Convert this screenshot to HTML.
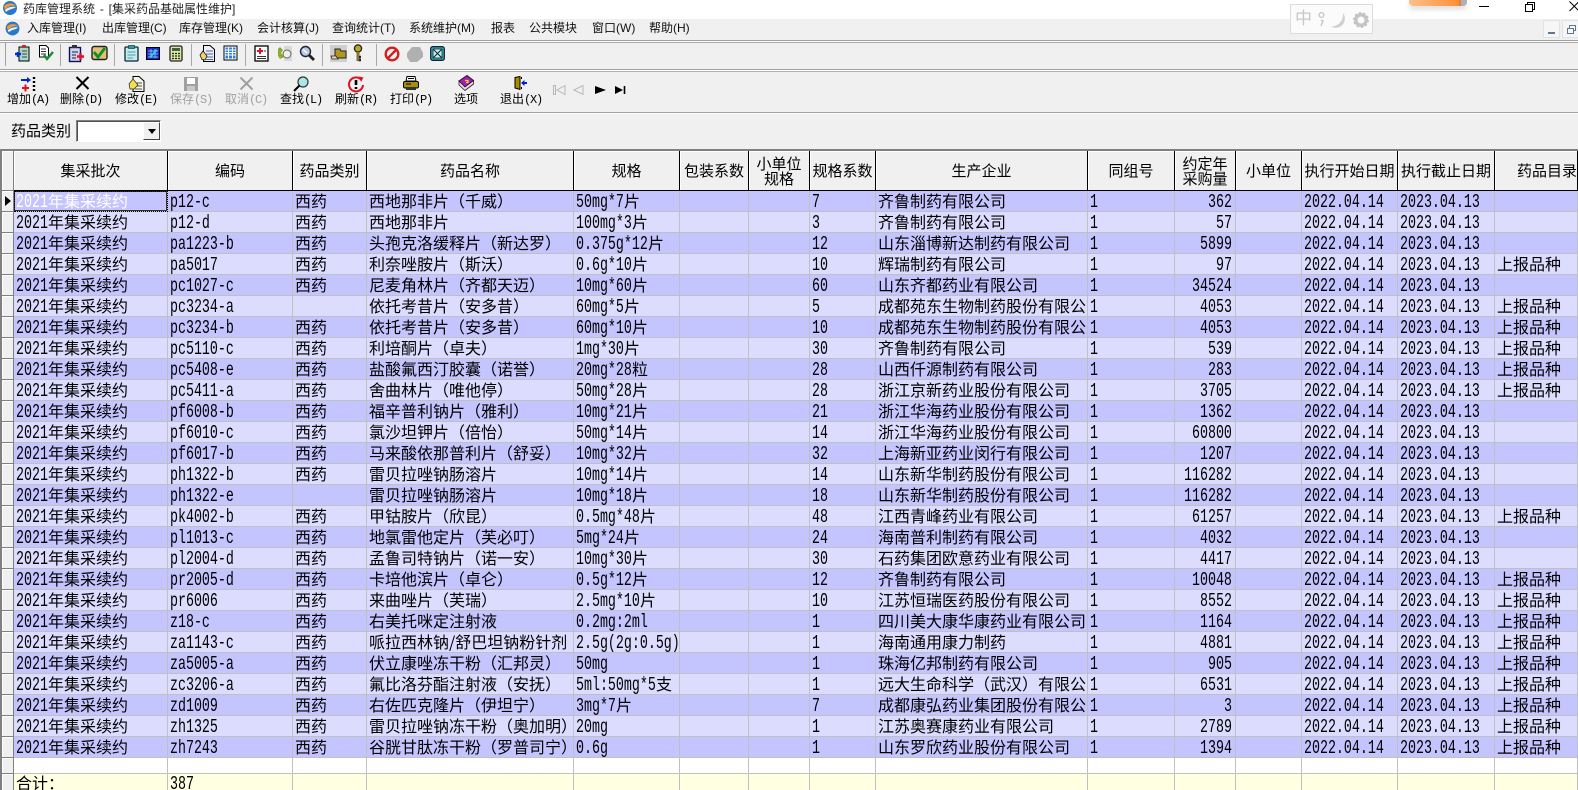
<!DOCTYPE html>
<html lang="zh"><head><meta charset="utf-8"><title>药库管理系统</title>
<style>
*{box-sizing:border-box}
html,body{margin:0;padding:0}
body{width:1578px;height:787px;overflow:hidden;position:relative;background:#f0f0f0;font-family:"Liberation Sans","WenQuanYi Zen Hei","Noto Sans CJK SC",sans-serif;color:#000}
.a{position:absolute;white-space:nowrap}
.ln{position:absolute;left:0;width:1578px;height:1px;background:#a0a0a0}
.vs{position:absolute;top:44px;width:1px;height:22px;background:#a8a8a8}
.m{font-size:12px;line-height:16px;top:20px;color:#111}
.lb{font-size:12px;line-height:16px;top:91px;font-family:"WenQuanYi Zen Hei","Noto Sans CJK SC",sans-serif}
.lb i{font:normal 12px/16px "Liberation Mono",monospace;letter-spacing:-1.2px}
.g{color:#a0a0a0}
svg{position:absolute;overflow:visible}
table{position:absolute;left:0;top:151px;width:1578px;border-collapse:separate;border-spacing:0;table-layout:fixed;font:16px/18px "WenQuanYi Zen Hei","Noto Sans CJK SC",sans-serif}
td{height:21px;padding:0 0 0 2px;border-right:1px solid #c0c0c0;border-bottom:1px solid #c0c0c0;overflow:hidden;white-space:nowrap;vertical-align:top}
td i{display:inline-block;height:18px;vertical-align:top;font:normal 19px/18px "Liberation Mono",monospace;transform:translateY(2px) scaleX(.7);transform-origin:0 50%;white-space:nowrap}
.n1{width:8px}.n2{width:16px}.n3{width:24px}.n4{width:32px}.n5{width:40px}.n6{width:48px}.n7{width:56px}.n8{width:64px}.n9{width:72px}.n10{width:80px}.n13{width:104px}
td.r{text-align:right;padding:0 3px 0 0}
tr.h td{height:40px;background:#f0f0f0;border-right:1px solid #000;border-bottom:1px solid #000;box-shadow:inset 1px 1px #fff;text-align:center;padding:0;font-size:15px;line-height:15px;vertical-align:middle}
td.s,tr.h td.s{background:#f0f0f0;border-left:2px solid #808080;border-right:1px solid #808080;border-bottom:1px solid #808080;box-shadow:inset 1px 1px #fff;padding:0;position:relative}
tr.d td{background:#c4c4ff}
tr.e td{background:#dcdcff}
tr.d td.s,tr.e td.s{background:#f0f0f0}
tr.b td{height:16px;background:#fff;font-size:1px;line-height:1px}
tr.b td.s,tr.t td.s{background:#f0f0f0}
tr.t td{height:14px;background:#ffffe1;border-bottom:0;line-height:16px}
tr.t td i{height:16px;line-height:16px}
td.f{color:#fff;outline:1px dotted #000;outline-offset:-1px;box-shadow:inset 0 0 0 1px #333}
</style></head><body>

<!-- title bar -->
<div class="a" style="left:0;top:0;width:1578px;height:19px;background:#fff"></div>
<svg style="left:2px;top:0" width="16" height="16" viewBox="0 0 16 16"><circle cx="8" cy="8" r="7" fill="#2a78c8"/><path d="M2 6C6 2 12 3 14 6C10 5 6 6 3 10Z" fill="#f29a2e"/><path d="M3 10C6 7 10 6 14 7C12 9 7 9 4 12Z" fill="#e8eef5"/></svg>
<div class="a" style="left:23px;top:1px;font-size:12px;line-height:16px;color:#222;word-spacing:1.5px">药库管理系统 - [集采药品基础属性维护]</div>

<!-- IME widget -->
<div class="a" style="left:1290px;top:4px;width:83px;height:30px;background:#fbfbfb;border:1px solid #dcdcdc"></div>
<div class="a" style="left:1295px;top:9px;font-size:17px;line-height:20px;color:#c8c8c8">中</div>
<svg style="left:1318px;top:11px" width="54" height="20" viewBox="0 0 54 20"><circle cx="3.500" cy="4" r="2.400" fill="none" stroke="#c4c4c4" stroke-width="1.300"/><path d="M3 9L5 10L3 15" fill="none" stroke="#c4c4c4" stroke-width="1.400"/><path d="M25 2A9.200 9.200 0 0 1 13 15.500A12 12 0 0 0 25 2Z" fill="#d0d0d0"/><circle cx="43" cy="9" r="5.200" fill="none" stroke="#c4c4c4" stroke-width="3.400"/><circle cx="43" cy="9" r="7.200" fill="none" stroke="#c4c4c4" stroke-width="1.600" stroke-dasharray="2.400 2.100"/></svg>

<!-- orange bar & window controls -->
<div class="a" style="left:1409px;top:0;width:58px;height:6px;background:linear-gradient(90deg,#fbc08a,#ff8f3a 85%,#f07020 88%,#b0b0b0 90%);border-radius:0 0 4px 4px;box-shadow:0 3px 6px rgba(0,0,0,.15)"></div>
<div class="a" style="left:1479px;top:6px;width:10px;height:1px;background:#000"></div>
<svg style="left:1524px;top:1px" width="12" height="12" viewBox="0 0 12 12"><path d="M1.500 3.500H8.500V10.500H1.500ZM3.500 3.500V1.500H10.500V8.500H8.500" fill="none" stroke="#000"/></svg>
<svg style="left:1569px;top:1px" width="10" height="10" viewBox="0 0 10 10"><path d="M.5.5L10 10M10 .5L.5 10" stroke="#000"/></svg>

<!-- menu bar -->
<svg style="left:5px;top:21px" width="15" height="15" viewBox="0 0 16 16"><circle cx="8" cy="8" r="7.400" fill="#2a78c8"/><path d="M2 6C6 2 12 3 14 6C10 5 6 6 3 10Z" fill="#f29a2e"/><path d="M3 10C6 7 10 6 14 7C12 9 7 9 4 12Z" fill="#e8eef5"/></svg>
<div class="a m" style="left:27px">入库管理(I)</div>
<div class="a m" style="left:102px">出库管理(C)</div>
<div class="a m" style="left:179px">库存管理(K)</div>
<div class="a m" style="left:257px">会计核算(J)</div>
<div class="a m" style="left:332px">查询统计(T)</div>
<div class="a m" style="left:409px">系统维护(M)</div>
<div class="a m" style="left:491px">报表</div>
<div class="a m" style="left:529px">公共模块</div>
<div class="a m" style="left:592px">窗口(W)</div>
<div class="a m" style="left:649px">帮助(H)</div>
<div class="a" style="left:1543px;top:20px;width:17px;height:18px;background:#f6f6f6;border:1px solid #e2e2e2"></div>
<div class="a" style="left:1548px;top:32px;width:7px;height:2px;background:#5f7890"></div>
<div class="a" style="left:1562px;top:20px;width:17px;height:18px;background:#f6f6f6;border:1px solid #e2e2e2"></div>
<svg style="left:1567px;top:25px" width="10" height="10" viewBox="0 0 10 10"><path d="M.5 3.500H6.500V8.500H.5ZM2.500 3.500V.5H8.500V5.500H6.500" fill="none" stroke="#5f7890"/></svg>

<!-- toolbar lines -->
<div class="ln" style="top:40px;background:#a0a0a0"></div><div class="ln" style="top:41px;background:#fff"></div><div class="ln" style="top:42px;background:#a8a8a8"></div>
<div class="ln" style="top:69px"></div><div class="ln" style="top:70px;background:#fff"></div><div class="ln" style="top:71px;background:#b0b0b0"></div>
<div class="ln" style="top:112px"></div><div class="ln" style="top:113px;background:#fff"></div>
<div class="a" style="left:5px;top:43px;width:1px;height:23px;background:#a0a0a0"></div>
<div class="a" style="left:9px;top:43px;width:2px;height:1px;background:#fff"></div>
<div class="vs" style="left:60px"></div><div class="vs" style="left:114px"></div><div class="vs" style="left:191px"></div><div class="vs" style="left:245px"></div><div class="vs" style="left:322px"></div><div class="vs" style="left:376px"></div>

<!-- toolbar 1 icons -->
<svg style="left:14px;top:45px" width="16" height="18" viewBox="0 0 16 18"><rect x="5" y="2" width="10" height="14" fill="#a8d8c8" stroke="#000"/><path d="M8 6H13M8 9H13M8 12H13" stroke="#444"/><rect x="8" y="0" width="4" height="3" fill="#c03030"/><path d="M1 9H7M4 7V12" stroke="#0030c0" stroke-width="2.400"/></svg>
<svg style="left:38px;top:44px" width="17" height="18" viewBox="0 0 17 18"><path d="M1.500 1.500H8L10.500 4V13H1.500Z" fill="#fff" stroke="#000"/><path d="M3 5H8M3 7.500H8M3 10H8" stroke="#333"/><path d="M6 11L9 15L15 8" fill="none" stroke="#109030" stroke-width="2.400"/></svg>
<svg style="left:68px;top:45px" width="17" height="18" viewBox="0 0 17 18"><rect x="1.500" y="2.500" width="11" height="14" fill="#cfd4ef" stroke="#101060" stroke-width="1.400"/><path d="M4 7H10M4 10H8M4 13H8" stroke="#222"/><rect x="4" y="0" width="5" height="3" fill="#333"/><path d="M9 11.500H16M12.500 8V15" stroke="#e01030" stroke-width="2.400"/></svg>
<svg style="left:91px;top:45px" width="17" height="16" viewBox="0 0 17 16"><rect x="1" y="1.500" width="15" height="13" rx="2" fill="#e6c070" stroke="#222" stroke-width="1.400"/><path d="M3 7L7 12L14 3" fill="none" stroke="#109030" stroke-width="3"/></svg>
<svg style="left:124px;top:45px" width="15" height="18" viewBox="0 0 15 18"><rect x="1" y="2" width="13" height="14" rx="1" fill="#bfeef0" stroke="#123" stroke-width="1.300"/><rect x="4.500" y="0.500" width="6" height="3" fill="#28a0a8" stroke="#123" stroke-width=".6"/><path d="M3.500 7H11.500M3.500 10H11.500M3.500 13H9" stroke="#6090a0"/></svg>
<svg style="left:146px;top:47px" width="14" height="13" viewBox="0 0 14 13"><rect x=".5" y=".5" width="13" height="12" fill="#1828c8" stroke="#000"/><path d="M2 4H12M2 7H12M2 10H12M5 2V11M9 2V11" stroke="#80b8f0"/><path d="M4 10L11 3" stroke="#30d0d0" stroke-width="2"/></svg>
<svg style="left:169px;top:45px" width="14" height="18" viewBox="0 0 14 18"><rect x="1" y="1" width="12" height="15" rx="1.500" fill="#d8e8a0" stroke="#222" stroke-width="1.300"/><rect x="3" y="3" width="8" height="3" fill="#406040"/><path d="M3 8.500H5M6 8.500H8M9 8.500H11M3 11H5M6 11H8M9 11H11M3 13.500H5M6 13.500H8M9 13.500H11" stroke="#222" stroke-width="1.300"/></svg>
<svg style="left:199px;top:45px" width="17" height="18" viewBox="0 0 17 18"><path d="M4.500 .5H11L15.500 4.500V16.500H4.500Z" fill="#eef" stroke="#000"/><path d="M7 6H14M7 9H14M7 12H14M7 14.500H14" stroke="#4a6a8a"/><path d="M1 10L4 6L8 11L6 15L3 14.500Z" fill="#f0d070" stroke="#000" stroke-width=".7"/></svg>
<svg style="left:223px;top:45px" width="15" height="16" viewBox="0 0 15 16"><rect x="1" y="1" width="13" height="14" fill="#fff" stroke="#000"/><rect x="2.500" y="2.500" width="10" height="11" fill="#2a80e8"/><path d="M2.500 5H12.500M2.500 7.500H12.500M2.500 10H12.500M5.500 2.500V13.500M9.500 2.500V13.500" stroke="#fff" stroke-width=".9"/></svg>
<svg style="left:254px;top:45px" width="15" height="17" viewBox="0 0 15 17"><rect x="1" y="1" width="13" height="15" fill="#fff" stroke="#000" stroke-width="1.300"/><path d="M3 6H9M6 3V9" stroke="#e01020" stroke-width="2"/><path d="M3 11.500H12M3 13.500H12M10 6H12" stroke="#333"/></svg>
<svg style="left:276px;top:45px" width="17" height="17" viewBox="0 0 17 17"><rect x="8" y="1" width="8" height="15" fill="#d8d8d8"/><circle cx="11" cy="9" r="4" fill="#eee" stroke="#666"/><path d="M2 4L4 2L7 5L5 8L8 12L4 14L2 11Z" fill="#70b030"/><path d="M4 5V13" stroke="#c8a020" stroke-width="2" stroke-dasharray="2 1"/></svg>
<svg style="left:299px;top:45px" width="17" height="17" viewBox="0 0 17 17"><circle cx="6.500" cy="6.500" r="5" fill="#b8c8e8" stroke="#223" stroke-width="1.400"/><path d="M4 4.500L8 8" stroke="#fff" stroke-width="1.400"/><path d="M10 10L15 15" stroke="#222" stroke-width="2.800"/></svg>
<svg style="left:330px;top:45px" width="17" height="17" viewBox="0 0 17 17"><rect width="17" height="17" fill="#cfcfcf"/><path d="M5 4H10L11 6H16V13H5Z" fill="#b09820" stroke="#222"/><path d="M1 11H6L8 14H2Z" fill="#f0d8a8" stroke="#222" stroke-width=".8"/></svg>
<svg style="left:352px;top:44px" width="12" height="19" viewBox="0 0 12 19"><circle cx="6" cy="4.500" r="3.600" fill="#b8a820" stroke="#222" stroke-width="1.300"/><path d="M6 8V17M6 13H9M6 16H9" stroke="#222" stroke-width="2.600"/><path d="M6 8V17" stroke="#c8b020" stroke-width="1.200"/></svg>
<svg style="left:384px;top:46px" width="16" height="16" viewBox="0 0 16 16"><circle cx="8" cy="8" r="6.300" fill="#f8f0f0" stroke="#d02020" stroke-width="2.400"/><path d="M3.500 12.500L12.500 3.500" stroke="#d02020" stroke-width="2.400"/></svg>
<svg style="left:407px;top:46px" width="16" height="16" viewBox="0 0 16 16"><path d="M5 1H13L16 7V11L10 16H3L0 11V7Z" fill="#b0b0b0"/></svg>
<svg style="left:430px;top:46px" width="15" height="15" viewBox="0 0 15 15"><rect x=".7" y=".7" width="13.600" height="13.600" rx="2" fill="#38b8b8" stroke="#123" stroke-width="1.300"/><rect x="3" y="3" width="9" height="9" fill="#c8f0f0" stroke="#123" stroke-width=".8"/><path d="M3 3L12 12M12 3L3 12" stroke="#123"/></svg>

<!-- toolbar 2 icons -->
<svg style="left:20px;top:76px" width="17" height="16" viewBox="0 0 17 16"><path d="M1 4H8" stroke="#0020e0" stroke-width="2"/><path d="M7 1L11 4L7 7Z" fill="#0020e0"/><path d="M2 12H9M5.500 8.500V15.500" stroke="#e01020" stroke-width="2"/><path d="M14 1V3M14 5V7M14 9V11M14 13V15" stroke="#000" stroke-width="2.400"/></svg>
<svg style="left:75px;top:76px" width="15" height="14" viewBox="0 0 15 14"><path d="M1.500 1L13.500 13M13.500 1L1.500 13" stroke="#000" stroke-width="2"/></svg>
<svg style="left:128px;top:76px" width="17" height="16" viewBox="0 0 17 16"><path d="M5 .5H11L16 5V15.500H5Z" fill="#f4f4e8" stroke="#000"/><path d="M7 7H14M7 10H14M7 13H14" stroke="#555"/><path d="M1 8L5 3L10 9L6 13H2Z" fill="#f0e050" stroke="#222" stroke-width=".7"/></svg>
<svg style="left:184px;top:77px" width="14" height="14" viewBox="0 0 14 14"><rect width="14" height="14" fill="#a0a0a0"/><rect x="3" y="1" width="8" height="6" fill="#fff"/><rect x="3" y="9" width="8" height="5" fill="#c8c8c8"/></svg>
<svg style="left:239px;top:77px" width="15" height="13" viewBox="0 0 15 13"><path d="M1.500 .5L13.500 12.500M13.500 .5L1.500 12.500" stroke="#a0a0a0" stroke-width="2"/></svg>
<svg style="left:293px;top:76px" width="16" height="16" viewBox="0 0 16 16"><circle cx="10" cy="6" r="5" fill="#a8e8e8" stroke="#333" stroke-width="1.200"/><path d="M6.500 9.500L1 15" stroke="#000" stroke-width="2"/></svg>
<svg style="left:348px;top:76px" width="16" height="16" viewBox="0 0 16 16"><path d="M13 3.500A7 7 0 1 0 15 9" fill="none" stroke="#e01020" stroke-width="2"/><path d="M11 .5L15.500 1.500L13 6Z" fill="#e01020"/><path d="M8 4V9" stroke="#000" stroke-width="2.600"/><path d="M8 11V13" stroke="#000" stroke-width="2.600"/></svg>
<svg style="left:403px;top:76px" width="16" height="15" viewBox="0 0 16 15"><path d="M4 .5H12L13 5H3Z" fill="#fff" stroke="#000"/><path d="M5 2.500H11" stroke="#000"/><rect x=".5" y="5.500" width="15" height="6.500" rx="1.500" fill="#a89000" stroke="#000"/><rect x="3" y="11" width="10" height="3" fill="#333"/><path d="M3 8H8" stroke="#000"/></svg>
<svg style="left:458px;top:75px" width="16" height="16" viewBox="0 0 16 16"><path d="M1 6L9 .5L15.500 5.500L7 12Z" fill="#a020b0" stroke="#301030"/><path d="M1 6V10L7 15.500L15.500 9V5.500L7 12Z" fill="#e8e0e0" stroke="#301030" stroke-width=".8"/><path d="M7 5.500H10V7.500H8" fill="none" stroke="#f0e020" stroke-width="1.300"/></svg>
<svg style="left:514px;top:76px" width="14" height="14" viewBox="0 0 14 14"><path d="M1 1.500L6 .5V13.500L1 12Z" fill="#a88c00" stroke="#000"/><path d="M7.500 1V3M7.500 11V13" stroke="#000"/><path d="M13 7H10" stroke="#0020d0" stroke-width="2"/><path d="M10.500 4L7 7L10.500 10Z" fill="#0020d0"/></svg>
<svg style="left:553px;top:85px" width="74" height="11" viewBox="0 0 74 11"><path d="M.5 .5V9.500H2.500V.5ZM12 .5L4 5L12 9.500Z" fill="#f0f0f0" stroke="#b8b8b8"/><path d="M30 .5L21 5L30 9.500Z" fill="#f0f0f0" stroke="#b8b8b8"/><path d="M42 1L53 5L42 9Z" fill="#000"/><path d="M62 1L70 5L62 9Z" fill="#000"/><path d="M71.500 1V9" stroke="#000" stroke-width="1.600"/></svg>

<!-- toolbar 2 labels -->
<div class="a lb" style="left:7px">增加<i>(A)</i></div>
<div class="a lb" style="left:60px">删除<i>(D)</i></div>
<div class="a lb" style="left:115px">修改<i>(E)</i></div>
<div class="a lb g" style="left:170px">保存<i>(S)</i></div>
<div class="a lb g" style="left:225px">取消<i>(C)</i></div>
<div class="a lb" style="left:280px">查找<i>(L)</i></div>
<div class="a lb" style="left:335px">刷新<i>(R)</i></div>
<div class="a lb" style="left:390px">打印<i>(P)</i></div>
<div class="a lb" style="left:454px">选项</div>
<div class="a lb" style="left:500px">退出<i>(X)</i></div>

<!-- filter -->
<div class="a" style="left:11px;top:121px;font:15px/20px 'WenQuanYi Zen Hei','Noto Sans CJK SC',sans-serif">药品类别</div>
<div class="a" style="left:76px;top:120px;width:85px;height:22px;background:#fff;border:1px solid;border-color:#808080 #fff #fff #808080;box-shadow:inset 1px 1px #505050"></div>
<div class="a" style="left:143px;top:122px;width:17px;height:18px;background:#f0f0f0;border:1px solid;border-color:#fff #404040 #404040 #fff"></div>
<svg style="left:148px;top:129px" width="8" height="5" viewBox="0 0 8 5"><path d="M0 0H8L4 5Z"/></svg>

<!-- grid top -->
<div class="ln" style="top:149px;height:2px;background:#808080"></div>

<table>
<colgroup><col style="width:14px"><col style="width:154px"><col style="width:125px"><col style="width:74px"><col style="width:207px"><col style="width:106px"><col style="width:69px"><col style="width:61px"><col style="width:66px"><col style="width:212px"><col style="width:87px"><col style="width:61px"><col style="width:66px"><col style="width:96px"><col style="width:97px"><col style="width:83px"></colgroup>
<tr class="h"><td class="s"></td><td>集采批次</td><td>编码</td><td>药品类别</td><td>药品名称</td><td>规格</td><td>包装系数</td><td>小单位<br>规格</td><td>规格系数</td><td>生产企业</td><td>同组号</td><td>约定年<br>采购量</td><td>小单位</td><td>执行开始日期</td><td>执行截止日期</td><td style="text-align:left;padding-left:22px">药品目录分类</td></tr>
<tr class="d"><td class="s"><svg style="left:3px;top:5px" width="6" height="10" viewBox="0 0 6 10"><path d="M0 0L6 5L0 10Z"/></svg></td><td class="f"><i class="n4">2021</i>年集采续约</td><td><i class="n5">p12-c</i></td><td>西药</td><td>西地那非片（千威）</td><td><i class="n6">50mg*7</i>片</td><td></td><td></td><td><i class="n1">7</i></td><td>齐鲁制药有限公司</td><td><i class="n1">1</i></td><td class="r"><i class="n3">362</i></td><td></td><td><i class="n10">2022.04.14</i></td><td><i class="n10">2023.04.13</i></td><td></td></tr>
<tr class="e"><td class="s"></td><td><i class="n4">2021</i>年集采续约</td><td><i class="n5">p12-d</i></td><td>西药</td><td>西地那非片</td><td><i class="n7">100mg*3</i>片</td><td></td><td></td><td><i class="n1">3</i></td><td>齐鲁制药有限公司</td><td><i class="n1">1</i></td><td class="r"><i class="n2">57</i></td><td></td><td><i class="n10">2022.04.14</i></td><td><i class="n10">2023.04.13</i></td><td></td></tr>
<tr class="d"><td class="s"></td><td><i class="n4">2021</i>年集采续约</td><td><i class="n8">pa1223-b</i></td><td>西药</td><td>头孢克洛缓释片（新达罗）</td><td><i class="n9">0.375g*12</i>片</td><td></td><td></td><td><i class="n2">12</i></td><td>山东淄博新达制药有限公司</td><td><i class="n1">1</i></td><td class="r"><i class="n4">5899</i></td><td></td><td><i class="n10">2022.04.14</i></td><td><i class="n10">2023.04.13</i></td><td></td></tr>
<tr class="e"><td class="s"></td><td><i class="n4">2021</i>年集采续约</td><td><i class="n6">pa5017</i></td><td>西药</td><td>利奈唑胺片（斯沃）</td><td><i class="n7">0.6g*10</i>片</td><td></td><td></td><td><i class="n2">10</i></td><td>辉瑞制药有限公司</td><td><i class="n1">1</i></td><td class="r"><i class="n2">97</i></td><td></td><td><i class="n10">2022.04.14</i></td><td><i class="n10">2023.04.13</i></td><td>上报品种</td></tr>
<tr class="d"><td class="s"></td><td><i class="n4">2021</i>年集采续约</td><td><i class="n8">pc1027-c</i></td><td>西药</td><td>尼麦角林片（齐都天迈）</td><td><i class="n7">10mg*60</i>片</td><td></td><td></td><td><i class="n2">60</i></td><td>山东齐都药业有限公司</td><td><i class="n1">1</i></td><td class="r"><i class="n5">34524</i></td><td></td><td><i class="n10">2022.04.14</i></td><td><i class="n10">2023.04.13</i></td><td></td></tr>
<tr class="e"><td class="s"></td><td><i class="n4">2021</i>年集采续约</td><td><i class="n8">pc3234-a</i></td><td></td><td>依托考昔片（安多昔）</td><td><i class="n6">60mg*5</i>片</td><td></td><td></td><td><i class="n1">5</i></td><td>成都苑东生物制药股份有限公司</td><td><i class="n1">1</i></td><td class="r"><i class="n4">4053</i></td><td></td><td><i class="n10">2022.04.14</i></td><td><i class="n10">2023.04.13</i></td><td>上报品种</td></tr>
<tr class="d"><td class="s"></td><td><i class="n4">2021</i>年集采续约</td><td><i class="n8">pc3234-b</i></td><td>西药</td><td>依托考昔片（安多昔）</td><td><i class="n7">60mg*10</i>片</td><td></td><td></td><td><i class="n2">10</i></td><td>成都苑东生物制药股份有限公司</td><td><i class="n1">1</i></td><td class="r"><i class="n4">4053</i></td><td></td><td><i class="n10">2022.04.14</i></td><td><i class="n10">2023.04.13</i></td><td>上报品种</td></tr>
<tr class="e"><td class="s"></td><td><i class="n4">2021</i>年集采续约</td><td><i class="n8">pc5110-c</i></td><td>西药</td><td>利培酮片（卓夫）</td><td><i class="n6">1mg*30</i>片</td><td></td><td></td><td><i class="n2">30</i></td><td>齐鲁制药有限公司</td><td><i class="n1">1</i></td><td class="r"><i class="n3">539</i></td><td></td><td><i class="n10">2022.04.14</i></td><td><i class="n10">2023.04.13</i></td><td>上报品种</td></tr>
<tr class="d"><td class="s"></td><td><i class="n4">2021</i>年集采续约</td><td><i class="n8">pc5408-e</i></td><td>西药</td><td>盐酸氟西汀胶囊（诺誉）</td><td><i class="n7">20mg*28</i>粒</td><td></td><td></td><td><i class="n2">28</i></td><td>山西仟源制药有限公司</td><td><i class="n1">1</i></td><td class="r"><i class="n3">283</i></td><td></td><td><i class="n10">2022.04.14</i></td><td><i class="n10">2023.04.13</i></td><td>上报品种</td></tr>
<tr class="e"><td class="s"></td><td><i class="n4">2021</i>年集采续约</td><td><i class="n8">pc5411-a</i></td><td>西药</td><td>舍曲林片（唯他停）</td><td><i class="n7">50mg*28</i>片</td><td></td><td></td><td><i class="n2">28</i></td><td>浙江京新药业股份有限公司</td><td><i class="n1">1</i></td><td class="r"><i class="n4">3705</i></td><td></td><td><i class="n10">2022.04.14</i></td><td><i class="n10">2023.04.13</i></td><td>上报品种</td></tr>
<tr class="d"><td class="s"></td><td><i class="n4">2021</i>年集采续约</td><td><i class="n8">pf6008-b</i></td><td>西药</td><td>福辛普利钠片（雅利）</td><td><i class="n7">10mg*21</i>片</td><td></td><td></td><td><i class="n2">21</i></td><td>浙江华海药业股份有限公司</td><td><i class="n1">1</i></td><td class="r"><i class="n4">1362</i></td><td></td><td><i class="n10">2022.04.14</i></td><td><i class="n10">2023.04.13</i></td><td></td></tr>
<tr class="e"><td class="s"></td><td><i class="n4">2021</i>年集采续约</td><td><i class="n8">pf6010-c</i></td><td>西药</td><td>氯沙坦钾片（倍怡）</td><td><i class="n7">50mg*14</i>片</td><td></td><td></td><td><i class="n2">14</i></td><td>浙江华海药业股份有限公司</td><td><i class="n1">1</i></td><td class="r"><i class="n5">60800</i></td><td></td><td><i class="n10">2022.04.14</i></td><td><i class="n10">2023.04.13</i></td><td></td></tr>
<tr class="d"><td class="s"></td><td><i class="n4">2021</i>年集采续约</td><td><i class="n8">pf6017-b</i></td><td>西药</td><td>马来酸依那普利片（舒妥）</td><td><i class="n7">10mg*32</i>片</td><td></td><td></td><td><i class="n2">32</i></td><td>上海新亚药业闵行有限公司</td><td><i class="n1">1</i></td><td class="r"><i class="n4">1207</i></td><td></td><td><i class="n10">2022.04.14</i></td><td><i class="n10">2023.04.13</i></td><td></td></tr>
<tr class="e"><td class="s"></td><td><i class="n4">2021</i>年集采续约</td><td><i class="n8">ph1322-b</i></td><td>西药</td><td>雷贝拉唑钠肠溶片</td><td><i class="n7">10mg*14</i>片</td><td></td><td></td><td><i class="n2">14</i></td><td>山东新华制药股份有限公司</td><td><i class="n1">1</i></td><td class="r"><i class="n6">116282</i></td><td></td><td><i class="n10">2022.04.14</i></td><td><i class="n10">2023.04.13</i></td><td></td></tr>
<tr class="d"><td class="s"></td><td><i class="n4">2021</i>年集采续约</td><td><i class="n8">ph1322-e</i></td><td></td><td>雷贝拉唑钠肠溶片</td><td><i class="n7">10mg*18</i>片</td><td></td><td></td><td><i class="n2">18</i></td><td>山东新华制药股份有限公司</td><td><i class="n1">1</i></td><td class="r"><i class="n6">116282</i></td><td></td><td><i class="n10">2022.04.14</i></td><td><i class="n10">2023.04.13</i></td><td></td></tr>
<tr class="e"><td class="s"></td><td><i class="n4">2021</i>年集采续约</td><td><i class="n8">pk4002-b</i></td><td>西药</td><td>甲钴胺片（欣昆）</td><td><i class="n8">0.5mg*48</i>片</td><td></td><td></td><td><i class="n2">48</i></td><td>江西青峰药业有限公司</td><td><i class="n1">1</i></td><td class="r"><i class="n5">61257</i></td><td></td><td><i class="n10">2022.04.14</i></td><td><i class="n10">2023.04.13</i></td><td>上报品种</td></tr>
<tr class="d"><td class="s"></td><td><i class="n4">2021</i>年集采续约</td><td><i class="n8">pl1013-c</i></td><td>西药</td><td>地氯雷他定片（芙必叮）</td><td><i class="n6">5mg*24</i>片</td><td></td><td></td><td><i class="n2">24</i></td><td>海南普利制药有限公司</td><td><i class="n1">1</i></td><td class="r"><i class="n4">4032</i></td><td></td><td><i class="n10">2022.04.14</i></td><td><i class="n10">2023.04.13</i></td><td></td></tr>
<tr class="e"><td class="s"></td><td><i class="n4">2021</i>年集采续约</td><td><i class="n8">pl2004-d</i></td><td>西药</td><td>孟鲁司特钠片（诺一安）</td><td><i class="n7">10mg*30</i>片</td><td></td><td></td><td><i class="n2">30</i></td><td>石药集团欧意药业有限公司</td><td><i class="n1">1</i></td><td class="r"><i class="n4">4417</i></td><td></td><td><i class="n10">2022.04.14</i></td><td><i class="n10">2023.04.13</i></td><td></td></tr>
<tr class="d"><td class="s"></td><td><i class="n4">2021</i>年集采续约</td><td><i class="n8">pr2005-d</i></td><td>西药</td><td>卡培他滨片（卓仑）</td><td><i class="n7">0.5g*12</i>片</td><td></td><td></td><td><i class="n2">12</i></td><td>齐鲁制药有限公司</td><td><i class="n1">1</i></td><td class="r"><i class="n5">10048</i></td><td></td><td><i class="n10">2022.04.14</i></td><td><i class="n10">2023.04.13</i></td><td>上报品种</td></tr>
<tr class="e"><td class="s"></td><td><i class="n4">2021</i>年集采续约</td><td><i class="n6">pr6006</i></td><td>西药</td><td>来曲唑片（芙瑞）</td><td><i class="n8">2.5mg*10</i>片</td><td></td><td></td><td><i class="n2">10</i></td><td>江苏恒瑞医药股份有限公司</td><td><i class="n1">1</i></td><td class="r"><i class="n4">8552</i></td><td></td><td><i class="n10">2022.04.14</i></td><td><i class="n10">2023.04.13</i></td><td>上报品种</td></tr>
<tr class="d"><td class="s"></td><td><i class="n4">2021</i>年集采续约</td><td><i class="n5">z18-c</i></td><td>西药</td><td>右美托咪定注射液</td><td><i class="n9">0.2mg:2ml</i></td><td></td><td></td><td><i class="n1">1</i></td><td>四川美大康华康药业有限公司</td><td><i class="n1">1</i></td><td class="r"><i class="n4">1164</i></td><td></td><td><i class="n10">2022.04.14</i></td><td><i class="n10">2023.04.13</i></td><td>上报品种</td></tr>
<tr class="e"><td class="s"></td><td><i class="n4">2021</i>年集采续约</td><td><i class="n8">za1143-c</i></td><td>西药</td><td>哌拉西林钠/舒巴坦钠粉针剂</td><td><i class="n13">2.5g(2g:0.5g)</i></td><td></td><td></td><td><i class="n1">1</i></td><td>海南通用康力制药</td><td><i class="n1">1</i></td><td class="r"><i class="n4">4881</i></td><td></td><td><i class="n10">2022.04.14</i></td><td><i class="n10">2023.04.13</i></td><td>上报品种</td></tr>
<tr class="d"><td class="s"></td><td><i class="n4">2021</i>年集采续约</td><td><i class="n8">za5005-a</i></td><td>西药</td><td>伏立康唑冻干粉（汇邦灵）</td><td><i class="n4">50mg</i></td><td></td><td></td><td><i class="n1">1</i></td><td>珠海亿邦制药有限公司</td><td><i class="n1">1</i></td><td class="r"><i class="n3">905</i></td><td></td><td><i class="n10">2022.04.14</i></td><td><i class="n10">2023.04.13</i></td><td>上报品种</td></tr>
<tr class="e"><td class="s"></td><td><i class="n4">2021</i>年集采续约</td><td><i class="n8">zc3206-a</i></td><td>西药</td><td>氟比洛芬酯注射液（安抚）</td><td><i class="n10">5ml:50mg*5</i>支</td><td></td><td></td><td><i class="n1">1</i></td><td>远大生命科学（武汉）有限公司</td><td><i class="n1">1</i></td><td class="r"><i class="n4">6531</i></td><td></td><td><i class="n10">2022.04.14</i></td><td><i class="n10">2023.04.13</i></td><td>上报品种</td></tr>
<tr class="d"><td class="s"></td><td><i class="n4">2021</i>年集采续约</td><td><i class="n6">zd1009</i></td><td>西药</td><td>右佐匹克隆片（伊坦宁）</td><td><i class="n5">3mg*7</i>片</td><td></td><td></td><td><i class="n1">7</i></td><td>成都康弘药业集团股份有限公司</td><td><i class="n1">1</i></td><td class="r"><i class="n1">3</i></td><td></td><td><i class="n10">2022.04.14</i></td><td><i class="n10">2023.04.13</i></td><td>上报品种</td></tr>
<tr class="e"><td class="s"></td><td><i class="n4">2021</i>年集采续约</td><td><i class="n6">zh1325</i></td><td>西药</td><td>雷贝拉唑钠冻干粉（奥加明）</td><td><i class="n4">20mg</i></td><td></td><td></td><td><i class="n1">1</i></td><td>江苏奥赛康药业有限公司</td><td><i class="n1">1</i></td><td class="r"><i class="n4">2789</i></td><td></td><td><i class="n10">2022.04.14</i></td><td><i class="n10">2023.04.13</i></td><td>上报品种</td></tr>
<tr class="d"><td class="s"></td><td><i class="n4">2021</i>年集采续约</td><td><i class="n6">zh7243</i></td><td>西药</td><td>谷胱甘肽冻干粉（罗普司宁）</td><td><i class="n4">0.6g</i></td><td></td><td></td><td><i class="n1">1</i></td><td>山东罗欣药业股份有限公司</td><td><i class="n1">1</i></td><td class="r"><i class="n4">1394</i></td><td></td><td><i class="n10">2022.04.14</i></td><td><i class="n10">2023.04.13</i></td><td>上报品种</td></tr>
<tr class="b"><td class="s"></td><td></td><td></td><td></td><td></td><td></td><td></td><td></td><td></td><td></td><td></td><td></td><td></td><td></td><td></td><td></td></tr>
<tr class="t"><td class="s"></td><td>合计：</td><td><i class="n3">387</i></td><td></td><td></td><td></td><td></td><td></td><td></td><td></td><td></td><td></td><td></td><td></td><td></td><td></td></tr>
</table>
</body></html>
